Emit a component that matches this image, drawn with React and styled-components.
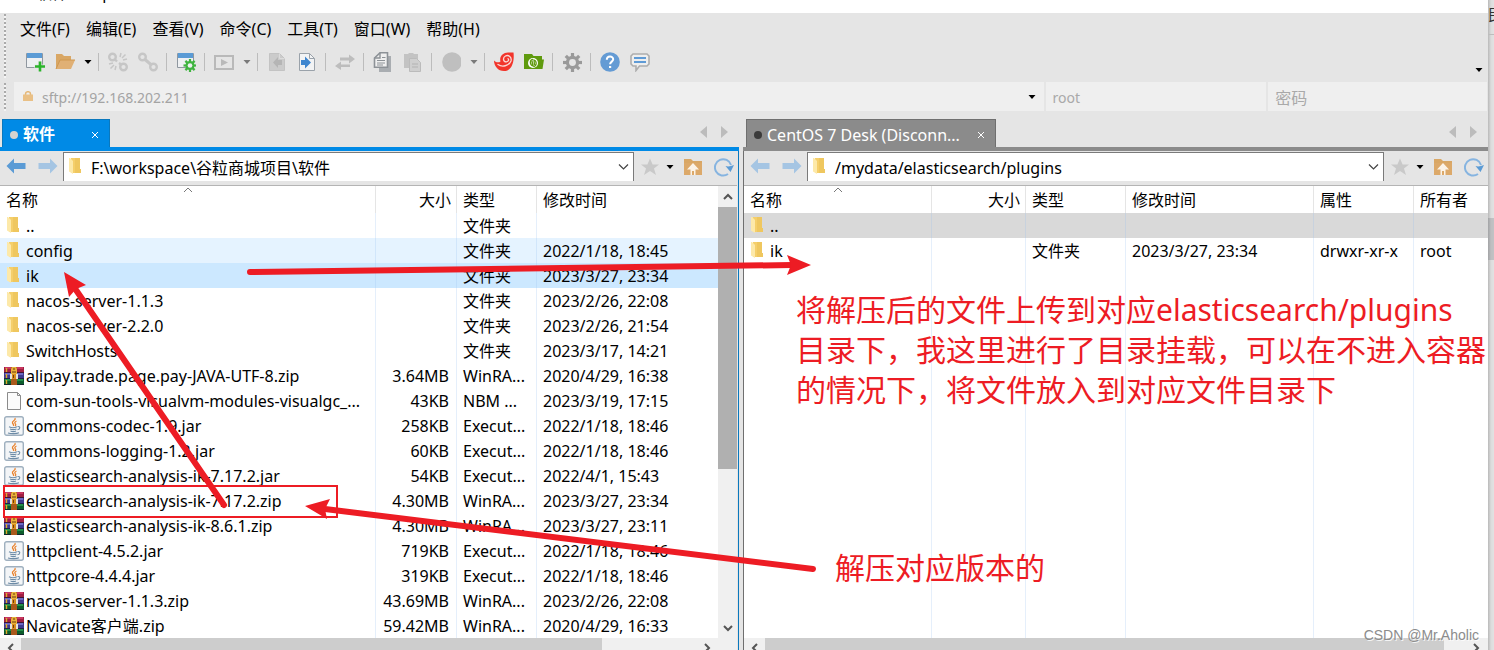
import React from 'react';
import styled, { createGlobalStyle, css } from 'styled-components';

const theme = {
  bg: '#e5e5e5',
  field: '#efefef',
  active: '#008ae6',
  activeDark: '#0a78bd',
  idle: '#8b8b8b',
  idleDark: '#6f6f6f',
  line: '#b4b4b4',
  headLine: '#e5e5e5',
  mark: '#ed1c24',
  font: '"Noto Sans", "Noto Sans CJK SC", sans-serif',
};

const GlobalStyle = createGlobalStyle`
  * { box-sizing: border-box; }
  html, body, #root { height: 100%; }
  body {
    margin: 0;
    overflow: hidden;
    background: #fff;
    color: #000;
    font-family: ${theme.font};
    font-size: 16px;
    line-height: 20px;
  }
  button, input {
    font: inherit;
    color: inherit;
    border: 0;
    padding: 0;
    margin: 0;
    background: none;
    border-radius: 0;
  }
  svg { display: block; flex: none; }
`;

const Screen = styled.div`
  position: relative;
  display: flex;
  height: 100vh;
  overflow: hidden;
`;

const Window = styled.main`
  flex: 1;
  min-width: 0;
  display: flex;
  flex-direction: column;
  background: ${theme.bg};
`;

const TitleBar = styled.header`
  height: 13px;
  flex: none;
  padding-left: 36px;
  background: #fff;
  overflow: hidden;
`;

const TitleText = styled.div`
  margin-top: -17px;
`;

const Bars = styled.div`
  flex: none;
  display: flex;
  flex-direction: column;
  height: 106px;
`;

const GripRow = styled.div`
  display: flex;
  padding-left: 4px;
  gap: ${(p) => p.$gap}px;
  margin-bottom: 4px;
`;

const Grip = styled.div`
  width: 2px;
  flex: none;
  margin-top: 1px;
  background: repeating-linear-gradient(to bottom, #aaa 0 2px, #f4f4f4 2px 4px);
`;

const BarBody = styled.div`
  flex: 1;
  min-width: 0;
`;

const Menu = styled.nav`
  display: flex;
  gap: 16px;
  height: 33px;
  align-items: center;
  padding: 0 0 2px 10px;
`;

const MenuItem = styled.button`
  white-space: nowrap;
`;

const Toolbar = styled.div`
  display: flex;
  align-items: center;
  height: 32px;
  padding: 0 2px 0 10px;
`;

const ToolButton = styled.button`
  width: ${(p) => (p.$caret ? 15 : 30)}px;
  height: ${(p) => (p.$low ? 16 : 30)}px;
  align-self: ${(p) => (p.$low ? 'flex-end' : 'center')};
  display: flex;
  align-items: center;
  justify-content: center;
  flex: none;
`;

const Sep = styled.span`
  width: 8px;
  height: 18px;
  flex: none;
  background: linear-gradient(#bcbcbc, #bcbcbc) 3px 0 / 1px 100% no-repeat;
`;

const Spacer = styled.span`
  flex: 1;
`;

const AddressRow = styled.div`
  display: grid;
  grid-template-columns: 1031fr 221fr 219fr;
  gap: 2px;
  padding-right: 1px;
`;

const AddressField = styled.div`
  display: flex;
  align-items: center;
  height: 29px;
  min-width: 0;
  padding: 0 8px 0 ${(p) => (p.$host ? 9 : 7)}px;
  background: ${theme.field};
  color: #a4a4a4;
  gap: 9px;

  input {
    flex: 1;
    min-width: 0;
    padding-top: 2px;
    font-size: ${(p) => (p.$latin ? 14 : 16)}px;
    outline: 0;
  }
  input::placeholder { color: #a9a9a9; opacity: 1; }
`;

const Panes = styled.div`
  flex: 1;
  min-height: 0;
  display: grid;
  grid-template-columns: 739fr 4px 745fr;
`;

const Pane = styled.section`
  grid-column: ${(p) => p.$column};
  min-width: 0;
  min-height: 0;
  display: flex;
  flex-direction: column;
`;

const TabStrip = styled.div`
  display: flex;
  align-items: stretch;
  height: 28px;
  flex: none;
  padding: 0 11px 0 ${(p) => (p.$active ? 2 : 3)}px;
`;

const Tab = styled.div`
  display: flex;
  align-items: center;
  width: ${(p) => (p.$active ? 108 : 250)}px;
  padding: 0 8px 0 7px;
  color: #fff;
  background: ${(p) => (p.$active ? theme.active : theme.idle)};
  border: 1px solid ${(p) => (p.$active ? theme.activeDark : theme.idleDark)};
  border-bottom: 0;
  font-weight: ${(p) => (p.$active ? 700 : 400)};
  white-space: nowrap;
`;

const Dot = styled.span`
  width: 8px;
  height: 8px;
  flex: none;
  margin: 2px 5px 0 0;
  border-radius: 50%;
  background: ${(p) => (p.$active ? '#d6d3cf' : '#3b3b3b')};
`;

const TabLabel = styled.span`
  flex: 1;
  padding-top: ${(p) => (p.$active ? 1 : 2)}px;
`;

const CloseButton = styled.button`
  width: 12px;
  height: 12px;
  display: grid;
  place-items: center;
  margin-top: 3px;
`;

const TabArrows = styled.div`
  display: flex;
  margin-left: auto;
  gap: 14px;
  padding-top: 7px;

  button { height: 12px; }
`;

const PaneBody = styled.div`
  flex: 1;
  min-height: 0;
  display: flex;
  flex-direction: column;
  border-top: 4px solid ${(p) => (p.$active ? theme.active : theme.idle)};
  box-shadow: inset ${(p) => (p.$active ? '-1px' : '1px')} 0 0 ${(p) => (p.$active ? theme.activeDark : theme.idleDark)};
  padding: ${(p) => (p.$active ? '0 2px 0 0' : '0 0 0 1px')};
`;

const PathBar = styled.div`
  display: flex;
  align-items: flex-start;
  height: 35px;
  flex: none;
  padding: 1px ${(p) => (p.$active ? 0 : 1)}px 0 0;
  border-bottom: 1px solid ${theme.line};
`;

const IconButton = styled.button`
  width: ${(p) => p.$w}px;
  height: 29px;
  display: flex;
  align-items: center;
  justify-content: center;
  flex: none;
`;

const PathField = styled.div`
  display: flex;
  align-items: center;
  flex: 1;
  min-width: 0;
  height: 29px;
  padding: 0 4px 0 2px;
  background: #fff;
  border: 1px solid #7a7a7a;
  border-bottom: 0;

  input {
    flex: 1;
    min-width: 0;
    padding: 2px 0 0 5px;
    outline: 0;
  }
`;

const ListArea = styled.div`
  flex: 1;
  min-height: 0;
  display: flex;
  background: #fff;
`;

const Table = styled.table`
  flex: 1;
  width: 100%;
  height: 100%;
  table-layout: fixed;
  border-collapse: separate;
  border-spacing: 0;
`;

const TableWrap = styled.div`
  flex: 1;
  min-width: 0;
`;

const Th = styled.th`
  position: relative;
  height: 27px;
  padding: 0 5px 0 6px;
  text-align: ${(p) => (p.$right ? 'right' : 'left')};
  font-weight: 400;
  white-space: nowrap;
  border-right: 1px solid ${theme.headLine};

  &:last-child { border-right: 0; }
`;

const SortMark = styled.svg`
  position: absolute;
  top: 1px;
  left: 50%;
  margin-left: -5px;
`;

const rowTint = {
  hover: '#e5f3ff',
  selected: '#cce8ff',
  focus: '#d9d9d9',
};

const Tr = styled.tr`
  background: ${(p) => rowTint[p.$tint] || 'transparent'};
`;

const Td = styled.td`
  height: 25px;
  padding: 1px 7px 0 6px;
  text-align: ${(p) => (p.$right ? 'right' : 'left')};
  white-space: nowrap;
  overflow: hidden;
  border-right: 1px solid rgba(150, 190, 240, 0.25);

  &:last-child { border-right: 0; }

  ${(p) =>
    p.$fill &&
    css`
      height: auto;
    `}
`;

const FileName = styled.div`
  display: flex;
  align-items: center;
  gap: 2px;
  margin-left: -2px;
`;

const VScroll = styled.div`
  width: 19px;
  flex: none;
  display: flex;
  flex-direction: column;
  background: #f0f0f0;
`;

const HScroll = styled.div`
  height: 12px;
  flex: none;
  display: flex;
  overflow: hidden;
  background: #f0f0f0;
  padding-right: ${(p) => (p.$corner ? 20 : 2)}px;
`;

const ScrollButton = styled.button`
  width: ${(p) => (p.$v ? 19 : 21)}px;
  height: ${(p) => (p.$v ? 21 : 19)}px;
  display: grid;
  place-items: center;
  flex: none;
`;

const Track = styled.div`
  flex: 1;
  display: flex;
  flex-direction: ${(p) => (p.$v ? 'column' : 'row')};
`;

const Thumb = styled.div`
  flex: 0 0 ${(p) => p.$size}%;
  background: ${(p) => (p.$dark ? '#b0b0b0' : '#cdcdcd')};
`;

const BackWindow = styled.aside`
  width: 6px;
  flex: none;
  display: flex;
  flex-direction: column;
  overflow: hidden;
  background: linear-gradient(to right, #b9b9b9, #dcdcdc 3px, #e2e2e2);
  font-size: 15px;
`;

const BackTitle = styled.div`
  height: 35px;
  padding-top: 4px;
  border-bottom: 1px solid #bdbdbd;
  color: #333;
`;

const BackThumb = styled.div`
  height: 42px;
  margin-top: 183px;
  background: rgba(90, 95, 105, 0.24);
`;

const Drawing = styled.svg`
  position: absolute;
  top: 0;
  left: 0;
  pointer-events: none;
`;

const Note = styled.p`
  position: absolute;
  top: ${(p) => p.$top}px;
  left: ${(p) => p.$left}px;
  margin: 0;
  color: ${theme.mark};
  font-size: 30px;
  line-height: 40px;
  white-space: nowrap;
`;

const Watermark = styled.div`
  position: absolute;
  right: 15px;
  bottom: 5px;
  color: #8c8c8c;
  text-shadow: 1px 1px 0 rgba(255, 255, 255, 0.8);
  font-family: "Liberation Sans", sans-serif;
  font-size: 14px;
`;

/* ---------- icons ---------- */

const Svg = ({ w = 20, h = 20, children, ...rest }) => (
  <svg width={w} height={h} viewBox={`0 0 ${w} ${h}`} fill="none" aria-hidden="true" {...rest}>
    {children}
  </svg>
);

const WindowShape = () => (
  <>
    <path d="M1.5 1.5h16v14h-16z" fill="#eef0f2" stroke="#8f979f" />
    <path d="M2 1h15v5H2z" fill="#5b9bd5" />
  </>
);

const Gear = ({ cx, cy, r, color, hole }) => (
  <g transform={`translate(${cx} ${cy})`}>
    {[0, 45, 90, 135].map((a) => (
      <path key={a} d={`M0 ${-r}V${r}`} stroke={color} strokeWidth={r * 0.34} transform={`rotate(${a})`} />
    ))}
    <circle r={r * 0.7} fill={color} />
    <circle r={r * 0.36} fill={hole} />
  </g>
);

const NewIcon = () => (
  <Svg>
    <WindowShape />
    <path d="M15 9v11M9.500 14.500h11" stroke={theme.bg} strokeWidth="4" />
    <path d="M15 9.500v10M10 14.500h10" stroke="#2bb42b" strokeWidth="2.600" />
  </Svg>
);

const OpenIcon = () => (
  <Svg>
    <path d="M1 2h6l2 2h7v13H1z" fill="#d9a765" />
    <path d="M1 17l4-9h15l-4 9z" fill="#e0b075" />
    <path d="M1 17l4-9h15" stroke="#cf9850" />
  </Svg>
);

const Caret = ({ color = '#000' }) => (
  <Svg w={8} h={6}>
    <path d="M0.500 1h7L4 5z" fill={color} />
  </Svg>
);

const LinkIcon = ({ broken }) => (
  <Svg>
    <g stroke="#c6c6c6" strokeWidth="2.400">
      <circle cx="4.500" cy="5" r="3.300" />
      <circle cx="15.500" cy="15" r="3.300" />
      {broken ? (
        <>
          <path d="M7 7.500l2 2M11 11l2 1.500" />
          <path d="M12 5l1-4M14 6l3.500-3.500M15 8l4-1M5 11l-4 1M6 13l-3.500 3.500M8 14l-1 4" strokeWidth="1.500" />
        </>
      ) : (
        <path d="M7 7.500l6.500 5.500" strokeWidth="3" />
      )}
    </g>
  </Svg>
);

const WindowGearIcon = () => (
  <Svg>
    <WindowShape />
    <Gear cx={14} cy={13.5} r={6.5} color="#3fb43f" hole="#eef0f2" />
  </Svg>
);

const PlayIcon = () => (
  <Svg>
    <path d="M1 4h18v13H1z" stroke="#b9b9b9" strokeWidth="2" />
    <path d="M7 7l7 3.500L7 14z" fill="#b9b9b9" />
  </Svg>
);

const PageArrowIcon = ({ on }) => (
  <Svg>
    <path d="M2.500 1.500h10l5 5v12h-15z" fill={on ? '#f2f3f4' : '#cbcbcb'} stroke={on ? '#9aa2aa' : '#c3c3c3'} />
    <path d="M12.500 1.500v5h5" stroke={on ? '#9aa2aa' : '#dcdcdc'} />
    {on ? (
      <path d="M4 8h4V4.500l6 6-6 6V13H4z" fill="#3f86cf" />
    ) : (
      <path d="M15 8h-4V5l-5 5.500 5 5.500v-3h4z" fill="#b5b5b5" />
    )}
  </Svg>
);

const SwapIcon = () => (
  <Svg>
    <path d="M5 5.500h9V2.500l6 4.500-6 4.500V8.500H5z" fill="#bdbdbd" />
    <path d="M15 12.500H6V9.500L0 14l6 4v-3h9z" fill="#bdbdbd" />
  </Svg>
);

const CopyIcon = () => (
  <Svg>
    <path d="M6 4h12v16H6z" fill="#a9adb1" />
    <path d="M7 .8h7.500v14.500h-13V6z" fill="#efefef" stroke="#8d9297" strokeWidth="1.600" />
    <path d="M7 .8V6H1.500" stroke="#8d9297" strokeWidth="1.400" />
    <path d="M4 8.500h8M4 11h8M9 5.500h3.500M4 13h6" stroke="#8d9297" />
  </Svg>
);

const PasteIcon = () => (
  <Svg>
    <path d="M1 2h4l1-1h4l1 1h4v14H1z" fill="#c3c3c3" />
    <path d="M6.500 6.500h7l4 4v9h-11z" fill="#cfcfcf" stroke="#bbb" />
    <path d="M9 12h6M9 15h6" stroke="#b3b3b3" />
  </Svg>
);

const GlobeIcon = () => (
  <Svg>
    <circle cx="11" cy="10" r="9.800" fill="#bfbfbf" />
  </Svg>
);

const SwirlIcon = () => (
  <Svg>
    <path d="M0 8.500C2 10.500 4.500 11 6.500 9.500 5 4.500 9 .5 14 .5h5.500C20.500 8 18.500 19 10 19 4 19 0 14 0 8.500z" fill="#f2352b" />
    <path
      d="M4 12.500c4 3 11 1.500 13-3.500 1-4-2.500-6.500-5.500-5-3 1.500-2.500 6 1 5.800 2-.2 2.700-2 1.500-3.200"
      stroke="#f9d9d6"
      strokeWidth="1.300"
      strokeLinecap="round"
    />
  </Svg>
);

const GreenFolderIcon = () => (
  <Svg>
    <path d="M0 2h8l1.500 2H18v3.500h2L18.500 17H0z" fill="#5f9a0e" />
    <circle cx="9" cy="11" r="5" fill="#fff" />
    <path d="M9 7.500c-3.500 0-3.500 5 0 6.500l-1-5M9.500 14.500c3.500-.5 3.500-5.500.5-6.500l.5 5" stroke="#5f9a0e" strokeWidth="1.300" />
  </Svg>
);

const SettingsIcon = () => (
  <Svg>
    <Gear cx={10.5} cy={10.5} r={9.5} color="#9a9a9a" hole={theme.bg} />
  </Svg>
);

const HelpIcon = () => (
  <Svg>
    <circle cx="10" cy="10" r="9.800" fill="#649bd4" />
    <path d="M6.800 7.800c0-4.300 6.400-4.300 6.400-.5 0 2.300-3.100 2.400-3.100 5" stroke="#fff" strokeWidth="2" />
    <path d="M9 14h2.200v2H9z" fill="#fff" />
  </Svg>
);

const ChatIcon = () => (
  <Svg>
    <path d="M3 2h14l2 2v8l-2 2H9.500L6 18.500V14H3l-2-2V4z" fill="#eee" stroke="#adadad" strokeWidth="1.600" />
    <path d="M4 6h12M4 10h12" stroke="#5f9bd6" strokeWidth="2" />
  </Svg>
);

const LockIcon = () => (
  <Svg w={10} h={12}>
    <path d="M2.500 4V3c0-3 5-3 5 0v1" stroke="#e5b878" strokeWidth="1.600" />
    <path d="M0 3.500h10V10H0z" fill="#e9c086" />
  </Svg>
);

const NavArrow = ({ forward, dim }) => (
  <Svg h={18}>
    <path
      d="M0.500 8L8 0.500V5h11.500v6H8v4.500z"
      transform={forward ? 'matrix(-1 0 0 1 20 0)' : undefined}
      fill={dim ? '#a5c5e3' : '#5b9bd5'}
    />
  </Svg>
);

const FolderIcon = () => (
  <Svg>
    <path d="M5 1h9v11h1v4H5z" fill="#f5cf6b" />
    <path d="M9 1h5v11h1v4H9z" fill="#efc75f" />
    <path d="M3 1h1l3 3v13l-4-2.500z" fill="#fde9a9" />
  </Svg>
);

const ZipIcon = () => (
  <Svg>
    <path d="M0 1h20v6H0z" fill="#a01f42" />
    <path d="M1 1h18v2H1z" fill="#c93660" />
    <path d="M0 7h20v6H0z" fill="#3d3b8f" />
    <path d="M1 7h18v2H1z" fill="#6d6ac4" />
    <path d="M0 13h20v6H0z" fill="#0d5c2c" />
    <path d="M1 13h18v2H1z" fill="#239049" />
    <path d="M2.500 2v4M2.500 8v4M2.500 14v4" stroke="#e0a92b" strokeWidth="1.400" />
    <path d="M0 6.500h20M0 12.500h20M0 18.500h20" stroke="#17122e" strokeOpacity="0.7" />
    <path d="M7 1h6v18H7z" fill="#a9591c" />
    <path d="M8 1h4l1 2v5H7V3z" fill="#e8b23a" />
    <path d="M6 8h2v5H6zM12 8h2v5h-2z" fill="#e4e1dc" />
    <path d="M8 8h4v5H8z" fill="#d98f1f" />
    <path d="M9 3h2M8 6h4M9.500 9v3" stroke="#6b3b10" />
  </Svg>
);

const PageIcon = () => (
  <Svg>
    <path d="M3.500 1.500h10l3 3v14h-13z" fill="#fbfbfb" stroke="#8b8b8b" />
    <path d="M13.500 1.500v3h3" stroke="#8b8b8b" />
  </Svg>
);

const JarIcon = () => (
  <Svg>
    <rect x="0.700" y="0.700" width="18.600" height="18.600" rx="2" fill="#f3f5f7" stroke="#9fb0bf" strokeWidth="1.400" />
    <path d="M11 2c1.500 2.500-3.500 3-2.500 5 .5 1 1.500 1.500 1 3M12.500 5c-2 1-2 2-1 3.200.5.800 0 1.500-.5 1.800" stroke="#e8822e" strokeWidth="1.300" />
    <path d="M5 10.800c2 .9 6 .9 8 0M6 13c2 .8 4.500.8 6.500 0M6.500 15c1.500.7 4 .7 5.500 0M4 17c3 .9 8.500.9 11-.2M13.500 10.500c3-.5 3 2.500 0 3.200" stroke="#6d8ba6" strokeWidth="1.100" />
  </Svg>
);

const icons = { folder: FolderIcon, zip: ZipIcon, page: PageIcon, jar: JarIcon };

const ChevronDown = () => (
  <Svg w={11} h={8}>
    <path d="M1 1.500l4.500 4.500L10 1.500" stroke="#444" strokeWidth="1.200" />
  </Svg>
);

const StarIcon = () => (
  <Svg h={20}>
    <path d="M10 1.500l2.600 6H19l-5 4 2 6.500-6-4-6 4 2-6.500-5-4h6.400z" fill="#c9c9c9" />
  </Svg>
);

const UpFolderIcon = () => (
  <Svg>
    <path d="M1 2h7l2 2h9v14H1z" fill="#d9a765" />
    <path d="M1 6h18v12H1z" fill="#dca96a" />
    <path d="M10 6l6 6.500h-3.500V18H11v-4H9v4H7.500v-5.500H4z" fill="#fbf3e8" />
  </Svg>
);

const RefreshIcon = () => (
  <Svg>
    <path d="M14 17A8.200 8.200 0 1 1 17 8" stroke="#86b4e0" strokeWidth="2" />
    <path d="M11.500 9c3 1 5.500 0 8.500-1l-3.500 7z" fill="#5b9bd5" />
  </Svg>
);

const Triangle = ({ right }) => (
  <Svg w={7} h={12}>
    <path d={right ? 'M0 0v12l7-6z' : 'M7 0v12L0 6z'} fill="#bcbcbc" />
  </Svg>
);

const Cross = () => (
  <Svg w={8} h={8}>
    <path d="M1 1l6 6M7 1L1 7" stroke="#fff" />
  </Svg>
);

const scrollTurn = { up: 0, right: 90, down: 180, left: 270 };

const ScrollArrow = ({ dir }) => (
  <Svg w={12} h={12}>
    <path d="M2 8l4-4 4 4" stroke="#555" strokeWidth="2" transform={`rotate(${scrollTurn[dir]} 6 6)`} />
  </Svg>
);

/* ---------- data ---------- */

const menus = ['文件(F)', '编辑(E)', '查看(V)', '命令(C)', '工具(T)', '窗口(W)', '帮助(H)'];

const tools = [
  { label: '新建', icon: <NewIcon /> },
  { label: '打开', icon: <OpenIcon /> },
  { label: '打开列表', icon: <Caret />, caret: true },
  null,
  { label: '断开', icon: <LinkIcon broken /> },
  { label: '重新连接', icon: <LinkIcon /> },
  null,
  { label: '属性', icon: <WindowGearIcon /> },
  null,
  { label: '运行', icon: <PlayIcon /> },
  { label: '运行列表', icon: <Caret color="#7a7a7a" />, caret: true },
  null,
  { label: '下载', icon: <PageArrowIcon /> },
  { label: '上传', icon: <PageArrowIcon on /> },
  null,
  { label: '同步', icon: <SwapIcon /> },
  null,
  { label: '复制', icon: <CopyIcon /> },
  { label: '粘贴', icon: <PasteIcon /> },
  null,
  { label: '编码', icon: <GlobeIcon /> },
  { label: '编码列表', icon: <Caret color="#7a7a7a" />, caret: true },
  null,
  { label: 'Xshell', icon: <SwirlIcon /> },
  { label: 'Xftp', icon: <GreenFolderIcon /> },
  null,
  { label: '选项', icon: <SettingsIcon /> },
  null,
  { label: '帮助', icon: <HelpIcon /> },
  { label: '反馈', icon: <ChatIcon /> },
];

const localColumns = [
  { title: '名称' },
  { title: '大小', width: 81, right: true },
  { title: '类型', width: 80 },
  { title: '修改时间', width: 181 },
];

const localRows = [
  ['folder', '..', '', '文件夹', ''],
  ['folder', 'config', '', '文件夹', '2022/1/18, 18:45', 'hover'],
  ['folder', 'ik', '', '文件夹', '2023/3/27, 23:34', 'selected'],
  ['folder', 'nacos-server-1.1.3', '', '文件夹', '2023/2/26, 22:08'],
  ['folder', 'nacos-server-2.2.0', '', '文件夹', '2023/2/26, 21:54'],
  ['folder', 'SwitchHosts', '', '文件夹', '2023/3/17, 14:21'],
  ['zip', 'alipay.trade.page.pay-JAVA-UTF-8.zip', '3.64MB', 'WinRA...', '2020/4/29, 16:38'],
  ['page', 'com-sun-tools-visualvm-modules-visualgc_...', '43KB', 'NBM ...', '2023/3/19, 17:15'],
  ['jar', 'commons-codec-1.9.jar', '258KB', 'Execut...', '2022/1/18, 18:46'],
  ['jar', 'commons-logging-1.2.jar', '60KB', 'Execut...', '2022/1/18, 18:46'],
  ['jar', 'elasticsearch-analysis-ik-7.17.2.jar', '54KB', 'Execut...', '2022/4/1, 15:43'],
  ['zip', 'elasticsearch-analysis-ik-7.17.2.zip', '4.30MB', 'WinRA...', '2023/3/27, 23:34'],
  ['zip', 'elasticsearch-analysis-ik-8.6.1.zip', '4.30MB', 'WinRA...', '2023/3/27, 23:11'],
  ['jar', 'httpclient-4.5.2.jar', '719KB', 'Execut...', '2022/1/18, 18:46'],
  ['jar', 'httpcore-4.4.4.jar', '319KB', 'Execut...', '2022/1/18, 18:46'],
  ['zip', 'nacos-server-1.1.3.zip', '43.69MB', 'WinRA...', '2023/2/26, 22:08'],
  ['zip', 'Navicate客户端.zip', '59.42MB', 'WinRA...', '2020/4/29, 16:33'],
].map(([icon, name, size, type, time, tint]) => ({ icon, tint, cells: [name, size, type, time] }));

const remoteColumns = [
  { title: '名称' },
  { title: '大小', width: 94, right: true },
  { title: '类型', width: 100 },
  { title: '修改时间', width: 188 },
  { title: '属性', width: 100 },
  { title: '所有者', width: 74 },
];

const remoteRows = [
  { icon: 'folder', tint: 'focus', cells: ['..', '', '', '', '', ''] },
  { icon: 'folder', cells: ['ik', '', '文件夹', '2023/3/27, 23:34', 'drwxr-xr-x', 'root'] },
];

/* ---------- parts ---------- */

const FileTable = ({ columns, rows }) => (
  <Table>
    <colgroup>
      {columns.map((c) => (
        <col key={c.title} width={c.width} />
      ))}
    </colgroup>
    <thead>
      <tr>
        {columns.map((c, i) => (
          <Th key={c.title} $right={c.right} scope="col">
            {c.title}
            {i === 0 && (
              <SortMark width="10" height="6" viewBox="0 0 10 6" fill="none" aria-hidden="true">
                <path d="M1 5l4-4 4 4" stroke="#777" />
              </SortMark>
            )}
          </Th>
        ))}
      </tr>
    </thead>
    <tbody>
      {rows.map((row) => {
        const Icon = icons[row.icon];
        return (
          <Tr key={row.cells[0]} $tint={row.tint}>
            {row.cells.map((cell, i) => (
              <Td key={columns[i].title} $right={columns[i].right}>
                {i === 0 ? (
                  <FileName>
                    <Icon />
                    {cell}
                  </FileName>
                ) : (
                  cell
                )}
              </Td>
            ))}
          </Tr>
        );
      })}
      <Tr>
        {columns.map((c) => (
          <Td key={c.title} $fill />
        ))}
      </Tr>
    </tbody>
  </Table>
);

const FilePane = ({ active, column, tab, path, columns, rows, thumb }) => (
  <Pane $column={column}>
    <TabStrip $active={active}>
      <Tab $active={active}>
        <Dot $active={active} />
        <TabLabel $active={active}>{tab}</TabLabel>
        <CloseButton aria-label="关闭">
          <Cross />
        </CloseButton>
      </Tab>
      <TabArrows>
        <button aria-label="上一个标签">
          <Triangle />
        </button>
        <button aria-label="下一个标签">
          <Triangle right />
        </button>
      </TabArrows>
    </TabStrip>
    <PaneBody $active={active}>
      <PathBar $active={active}>
        <IconButton $w={32} aria-label="后退">
          <NavArrow dim={!active} />
        </IconButton>
        <IconButton $w={31} aria-label="前进">
          <NavArrow forward dim />
        </IconButton>
        <PathField>
          <FolderIcon />
          <input aria-label="路径" defaultValue={path} />
          <button aria-label="路径列表">
            <ChevronDown />
          </button>
        </PathField>
        <IconButton $w={31} aria-label="收藏">
          <StarIcon />
        </IconButton>
        <IconButton $w={10} aria-label="收藏列表">
          <Caret />
        </IconButton>
        <IconButton $w={36} aria-label="上级目录">
          <UpFolderIcon />
        </IconButton>
        <IconButton $w={26} aria-label="刷新">
          <RefreshIcon />
        </IconButton>
      </PathBar>
      <ListArea>
        <TableWrap>
          <FileTable columns={columns} rows={rows} />
        </TableWrap>
        {active && (
          <VScroll>
            <ScrollButton $v aria-label="向上滚动">
              <ScrollArrow dir="up" />
            </ScrollButton>
            <Track $v>
              <Thumb $size={64} $dark />
            </Track>
            <ScrollButton $v aria-label="向下滚动">
              <ScrollArrow dir="down" />
            </ScrollButton>
          </VScroll>
        )}
      </ListArea>
      <HScroll $corner={active}>
        <ScrollButton aria-label="向左滚动">
          <ScrollArrow dir="left" />
        </ScrollButton>
        <Track>
          <Thumb $size={thumb} />
        </Track>
        <ScrollButton aria-label="向右滚动">
          <ScrollArrow dir="right" />
        </ScrollButton>
      </HScroll>
    </PaneBody>
  </Pane>
);

const Annotations = () => (
  <>
    <Drawing width="840" height="600" viewBox="0 0 840 600" fill="none" aria-hidden="true">
      <g stroke={theme.mark} strokeWidth="6" strokeLinecap="round">
        <path d="M250 272L792 265" />
        <path d="M224 505L76 290" />
        <path d="M813 569L325 509" />
      </g>
      <g fill={theme.mark}>
        <path d="M811 265L787 255L791 265L787 275z" />
        <path d="M64 272L86 285L76 289L69 297z" />
        <path d="M305 506L330 499L325 509L327 519z" />
      </g>
      <path d="M4 486h333v31H4z" stroke={theme.mark} strokeWidth="2" />
    </Drawing>
    <Note $top={290} $left={796}>
      将解压后的文件上传到对应elasticsearch/plugins
      <br />
      目录下，我这里进行了目录挂载，可以在不进入容器
      <br />
      的情况下，将文件放入到对应文件目录下
    </Note>
    <Note $top={548} $left={835}>
      解压对应版本的
    </Note>
    <Watermark>CSDN @Mr.Aholic</Watermark>
  </>
);

const App = () => (
  <>
    <GlobalStyle />
    <Screen>
      <Window>
        <TitleBar>
          <TitleText>软件 - Xftp</TitleText>
        </TitleBar>
        <Bars>
          <GripRow $gap={4}>
            <Grip />
            <BarBody>
              <Menu>
                {menus.map((m) => (
                  <MenuItem key={m}>{m}</MenuItem>
                ))}
              </Menu>
              <Toolbar>
                {tools.map((t, i) =>
                  t ? (
                    <ToolButton key={t.label} $caret={t.caret} aria-label={t.label}>
                      {t.icon}
                    </ToolButton>
                  ) : (
                    <Sep key={i} />
                  )
                )}
                <Spacer />
                <ToolButton $caret $low aria-label="更多">
                  <Caret />
                </ToolButton>
              </Toolbar>
            </BarBody>
          </GripRow>
          <GripRow $gap={8}>
            <Grip />
            <BarBody>
              <AddressRow>
                <AddressField $host $latin>
                  <LockIcon />
                  <input aria-label="主机" defaultValue="sftp://192.168.202.211" />
                  <button aria-label="主机列表">
                    <Caret />
                  </button>
                </AddressField>
                <AddressField $latin>
                  <input aria-label="用户名" placeholder="root" />
                </AddressField>
                <AddressField>
                  <input aria-label="密码" type="password" placeholder="密码" />
                </AddressField>
              </AddressRow>
            </BarBody>
          </GripRow>
        </Bars>
        <Panes>
          <FilePane
            active
            column={1}
            tab="软件"
            path="F:\workspace\谷粒商城项目\软件"
            columns={localColumns}
            rows={localRows}
            thumb={86}
          />
          <FilePane
            column={3}
            tab="CentOS 7 Desk (Disconn..."
            path="/mydata/elasticsearch/plugins"
            columns={remoteColumns}
            rows={remoteRows}
            thumb={97}
          />
        </Panes>
      </Window>
      <BackWindow>
        <BackTitle>民</BackTitle>
        <BackThumb />
      </BackWindow>
      <Annotations />
    </Screen>
  </>
);

export default App;
